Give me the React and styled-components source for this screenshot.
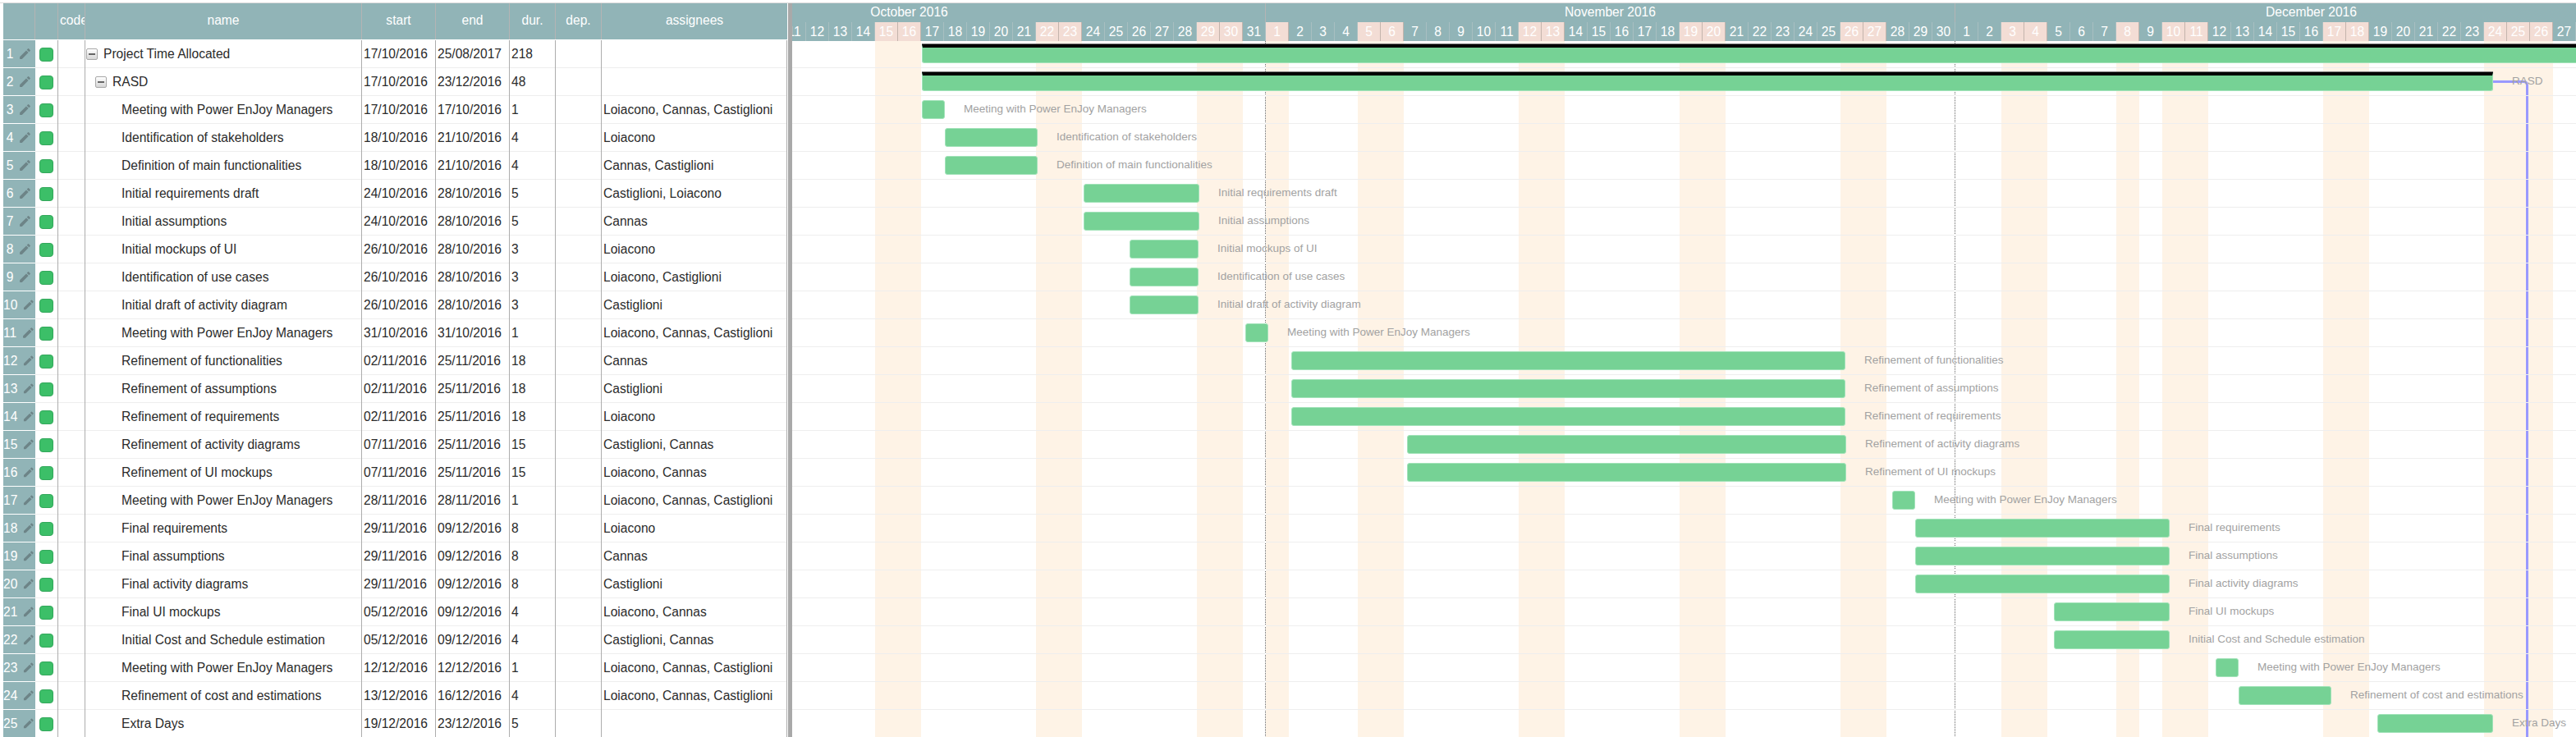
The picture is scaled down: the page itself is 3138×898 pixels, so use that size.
import React from 'react'
import styled, { createGlobalStyle } from 'styled-components'
import { MdEdit } from 'react-icons/md'

const headerColor = '#91b4b7'
const dayWidth = 28
// the bars run on a slightly wider scale than the day cells
const barDayWidth = 28.14
const barOrigin = -1.24

const GlobalStyle = createGlobalStyle`
  html, body {
    margin: 0;
    height: 100%;
    background: #fff;
    overflow: hidden;
  }
  body {
    font-family: "Liberation Sans", Arial, sans-serif;
    font-size: 15.6px;
    color: #2b2b2b;
  }
`

const Page = styled.div`
  height: 100vh;
  box-sizing: border-box;
  padding-top: 3px;
  overflow: hidden;
`
const Frame = styled.div`
  display: flex;
  height: 100%;
  border-top: 1px solid #dcdcdc;
  padding-left: 4px;
  overflow: hidden;
`
const TablePane = styled.div`
  flex: 0 0 955px;
  overflow: hidden;
`
const Splitter = styled.div`
  flex: 0 0 5px;
  margin-left: 1px;
  background: #a9a9a9;
`
const GanttPane = styled.div`
  flex: 1;
  min-width: 0;
  overflow: hidden;
`

const gridColumns = '39px 28px 33px 337px 90px 90px 56px 56px 226px'

const HeadRow = styled.div`
  display: grid;
  grid-template-columns: ${gridColumns};
  height: 44px;
  margin-bottom: 1px;
  background: ${headerColor};
`
const HeadCell = styled.div`
  box-sizing: border-box;
  border-right: 1px solid #b4b4b4;
  color: #fff;
  line-height: 42px;
  text-align: ${props => (props.$left ? 'left' : 'center')};
  padding-left: ${props => (props.$left ? '2px' : '0')};
  overflow: hidden;
  white-space: nowrap;
  &:last-child {
    border-right: none;
  }
`
const BodyRow = styled.div`
  display: grid;
  grid-template-columns: ${gridColumns};
  height: 34px;
  box-sizing: border-box;
  border-bottom: 1px solid #eee;
`
const Cell = styled.div`
  box-sizing: border-box;
  display: flex;
  align-items: center;
  padding-left: 2px;
  margin-bottom: -1px;
  border-right: 1px solid #adadad;
  white-space: nowrap;
  overflow: hidden;
`
const NumberCell = styled.div`
  display: flex;
  align-items: center;
  justify-content: center;
  gap: 6px;
  background: ${headerColor};
  color: #fff;
  border-bottom: 1px solid #fff;
  margin-bottom: -1px;
  svg {
    color: #6d8487;
  }
`
const StatusCell = styled(Cell)`
  justify-content: center;
  padding-left: 0;
`
const StatusDot = styled.span`
  display: block;
  width: 17px;
  height: 17px;
  box-sizing: border-box;
  border: 1px solid #33a75b;
  border-radius: 4px;
  background: #3cbf68;
`
const NameCell = styled(Cell)`
  padding-left: ${props => 1 + props.$level * 11}px;
`
const Expander = styled.span`
  position: relative;
  flex: 0 0 auto;
  width: 14px;
  height: 14px;
  box-sizing: border-box;
  margin-right: 7px;
  border: 1px solid #a8a8a8;
  border-radius: 2px;
  background: linear-gradient(#fff, #d6d6d6);
  &::after {
    content: '';
    position: absolute;
    left: 2px;
    right: 2px;
    top: 5px;
    height: 2px;
    background: #666;
  }
`
const Leaf = styled.span`
  padding-left: ${props => (props.$leaf ? '21px' : '0')};
`

const Timeline = styled.div`
  width: ${props => props.$days * dayWidth}px;
  margin-left: -291px;
`
const GanttHead = styled.div`
  position: relative;
  z-index: 2;
  background: ${headerColor};
  color: #fff;
`
const MonthRow = styled.div`
  display: flex;
  height: 23px;
`
const MonthCell = styled.div`
  flex: 0 0 ${props => props.$days * dayWidth}px;
  box-sizing: border-box;
  border-right: 1px solid #b4b4b4;
  text-align: center;
  line-height: 21px;
`
const DayRow = styled.div`
  display: flex;
  height: 23px;
`
const DayCell = styled.div`
  flex: 0 0 ${dayWidth}px;
  box-sizing: border-box;
  border-right: 1px solid ${props => (props.$off ? '#c4b4ac' : '#a8bfc1')};
  background: ${props => (props.$off ? '#f3ddd5' : 'transparent')};
  text-align: center;
  line-height: 23px;
`
const ChartBody = styled.div`
  position: relative;
  margin-top: -1px;
`
const Columns = styled.div`
  position: absolute;
  inset: 0 0 -40px 0;
  display: flex;
`
const Column = styled.div`
  flex: 0 0 ${dayWidth}px;
  box-sizing: border-box;
  background: ${props => (props.$off ? '#fef3e6' : 'transparent')};
  border-right: ${props => (props.$monthEnd ? '1px dotted #666' : 'none')};
`
const Link = styled.svg`
  position: absolute;
  left: 0;
  top: 0;
  width: 100%;
  height: 900px;
  pointer-events: none;
`
const ChartRow = styled.div`
  position: relative;
  display: flex;
  align-items: flex-start;
  height: 34px;
  box-sizing: border-box;
  border-bottom: 1px solid #eee;
  white-space: nowrap;
`
const Bar = styled.div`
  flex: 0 0 auto;
  height: 23px;
  margin-top: 5px;
  box-sizing: border-box;
  background: #76d295;
  border: 1px solid #a3e3ba;
  border-top: ${props => (props.$summary ? '4px solid #000' : '1px solid #a3e3ba')};
  border-radius: ${props => (props.$summary ? '0 0 3px 3px' : '3px')};
  box-shadow: ${props => (props.$summary ? '0 -1px 0 #777' : 'none')};
`
const BarLabel = styled.span`
  flex: 0 0 auto;
  margin-left: 23px;
  font-size: 13.5px;
  line-height: 32px;
  color: #a2a2a2;
`

const toDay = text => {
  const [d, m, y] = text.split('/').map(Number)
  return Math.round((Date.UTC(y, m - 1, d) - Date.UTC(2016, 9, 1)) / 86400000)
}

const team = 'Loiacono, Cannas, Castiglioni'
const meeting = 'Meeting with Power EnJoy Managers'

const tasks = [
  ['Project Time Allocated', '17/10/2016', '25/08/2017', 218, '', 0],
  ['RASD', '17/10/2016', '23/12/2016', 48, '', 1],
  [meeting, '17/10/2016', '17/10/2016', 1, team, 2],
  ['Identification of stakeholders', '18/10/2016', '21/10/2016', 4, 'Loiacono', 2],
  ['Definition of main functionalities', '18/10/2016', '21/10/2016', 4, 'Cannas, Castiglioni', 2],
  ['Initial requirements draft', '24/10/2016', '28/10/2016', 5, 'Castiglioni, Loiacono', 2],
  ['Initial assumptions', '24/10/2016', '28/10/2016', 5, 'Cannas', 2],
  ['Initial mockups of UI', '26/10/2016', '28/10/2016', 3, 'Loiacono', 2],
  ['Identification of use cases', '26/10/2016', '28/10/2016', 3, 'Loiacono, Castiglioni', 2],
  ['Initial draft of activity diagram', '26/10/2016', '28/10/2016', 3, 'Castiglioni', 2],
  [meeting, '31/10/2016', '31/10/2016', 1, team, 2],
  ['Refinement of functionalities', '02/11/2016', '25/11/2016', 18, 'Cannas', 2],
  ['Refinement of assumptions', '02/11/2016', '25/11/2016', 18, 'Castiglioni', 2],
  ['Refinement of requirements', '02/11/2016', '25/11/2016', 18, 'Loiacono', 2],
  ['Refinement of activity diagrams', '07/11/2016', '25/11/2016', 15, 'Castiglioni, Cannas', 2],
  ['Refinement of UI mockups', '07/11/2016', '25/11/2016', 15, 'Loiacono, Cannas', 2],
  [meeting, '28/11/2016', '28/11/2016', 1, team, 2],
  ['Final requirements', '29/11/2016', '09/12/2016', 8, 'Loiacono', 2],
  ['Final assumptions', '29/11/2016', '09/12/2016', 8, 'Cannas', 2],
  ['Final activity diagrams', '29/11/2016', '09/12/2016', 8, 'Castiglioni', 2],
  ['Final UI mockups', '05/12/2016', '09/12/2016', 4, 'Loiacono, Cannas', 2],
  ['Initial Cost and Schedule estimation', '05/12/2016', '09/12/2016', 4, 'Castiglioni, Cannas', 2],
  [meeting, '12/12/2016', '12/12/2016', 1, team, 2],
  ['Refinement of cost and estimations', '13/12/2016', '16/12/2016', 4, team, 2],
  ['Extra Days', '19/12/2016', '23/12/2016', 5, '', 2]
]

const months = [
  { name: 'October 2016', month: 9, days: 31 },
  { name: 'November 2016', month: 10, days: 30 },
  { name: 'December 2016', month: 11, days: 31 }
]
const holidays = ['10-1', '11-8', '11-26']

const days = months.flatMap(m =>
  Array.from({ length: m.days }, (_, i) => {
    const weekDay = new Date(Date.UTC(2016, m.month, i + 1)).getUTCDay()
    return {
      key: m.month + '-' + (i + 1),
      day: i + 1,
      off: weekDay === 0 || weekDay === 6 || holidays.includes(m.month + '-' + (i + 1)),
      monthEnd: i === m.days - 1
    }
  })
)

function TaskTable() {
  return (
    <TablePane>
      <HeadRow>
        <HeadCell />
        <HeadCell />
        <HeadCell $left>code</HeadCell>
        <HeadCell>name</HeadCell>
        <HeadCell>start</HeadCell>
        <HeadCell>end</HeadCell>
        <HeadCell>dur.</HeadCell>
        <HeadCell>dep.</HeadCell>
        <HeadCell>assignees</HeadCell>
      </HeadRow>
      {tasks.map(([name, start, end, dur, people, level], i) => (
        <BodyRow key={i}>
          <NumberCell>
            {i + 1}
            <MdEdit size={17} />
          </NumberCell>
          <StatusCell>
            <StatusDot />
          </StatusCell>
          <Cell />
          <NameCell $level={level}>
            {level < 2 && <Expander />}
            <Leaf $leaf={level === 2}>{name}</Leaf>
          </NameCell>
          <Cell>{start}</Cell>
          <Cell>{end}</Cell>
          <Cell>{dur}</Cell>
          <Cell />
          <Cell>{people}</Cell>
        </BodyRow>
      ))}
    </TablePane>
  )
}

function Gantt() {
  return (
    <GanttPane>
      <Timeline $days={days.length}>
        <GanttHead>
          <MonthRow>
            {months.map(m => (
              <MonthCell key={m.name} $days={m.days}>
                {m.name}
              </MonthCell>
            ))}
          </MonthRow>
          <DayRow>
            {days.map(d => (
              <DayCell key={d.key} $off={d.off}>
                {d.day}
              </DayCell>
            ))}
          </DayRow>
        </GanttHead>
        <ChartBody>
          <Columns>
            {days.map(d => (
              <Column key={d.key} $off={d.off} $monthEnd={d.monthEnd} />
            ))}
          </Columns>
          <Link>
            <path d="M2362 50.5H2400Q2404.5 50.5 2404.5 55V900" fill="none" stroke="#9999ff" strokeWidth="3" />
          </Link>
          {tasks.map(([name, start, end, , , level], i) => {
            const first = toDay(start)
            const length = toDay(end) - first + 1
            return (
              <ChartRow key={i}>
                <Bar
                  $summary={level < 2}
                  style={{
                    marginLeft: Math.round(barOrigin + first * barDayWidth),
                    width: Math.round(length * barDayWidth)
                  }}
                />
                <BarLabel>{name}</BarLabel>
              </ChartRow>
            )
          })}
        </ChartBody>
      </Timeline>
    </GanttPane>
  )
}

export default function App() {
  return (
    <>
      <GlobalStyle />
      <Page>
        <Frame>
          <TaskTable />
          <Splitter />
          <Gantt />
        </Frame>
      </Page>
    </>
  )
}
